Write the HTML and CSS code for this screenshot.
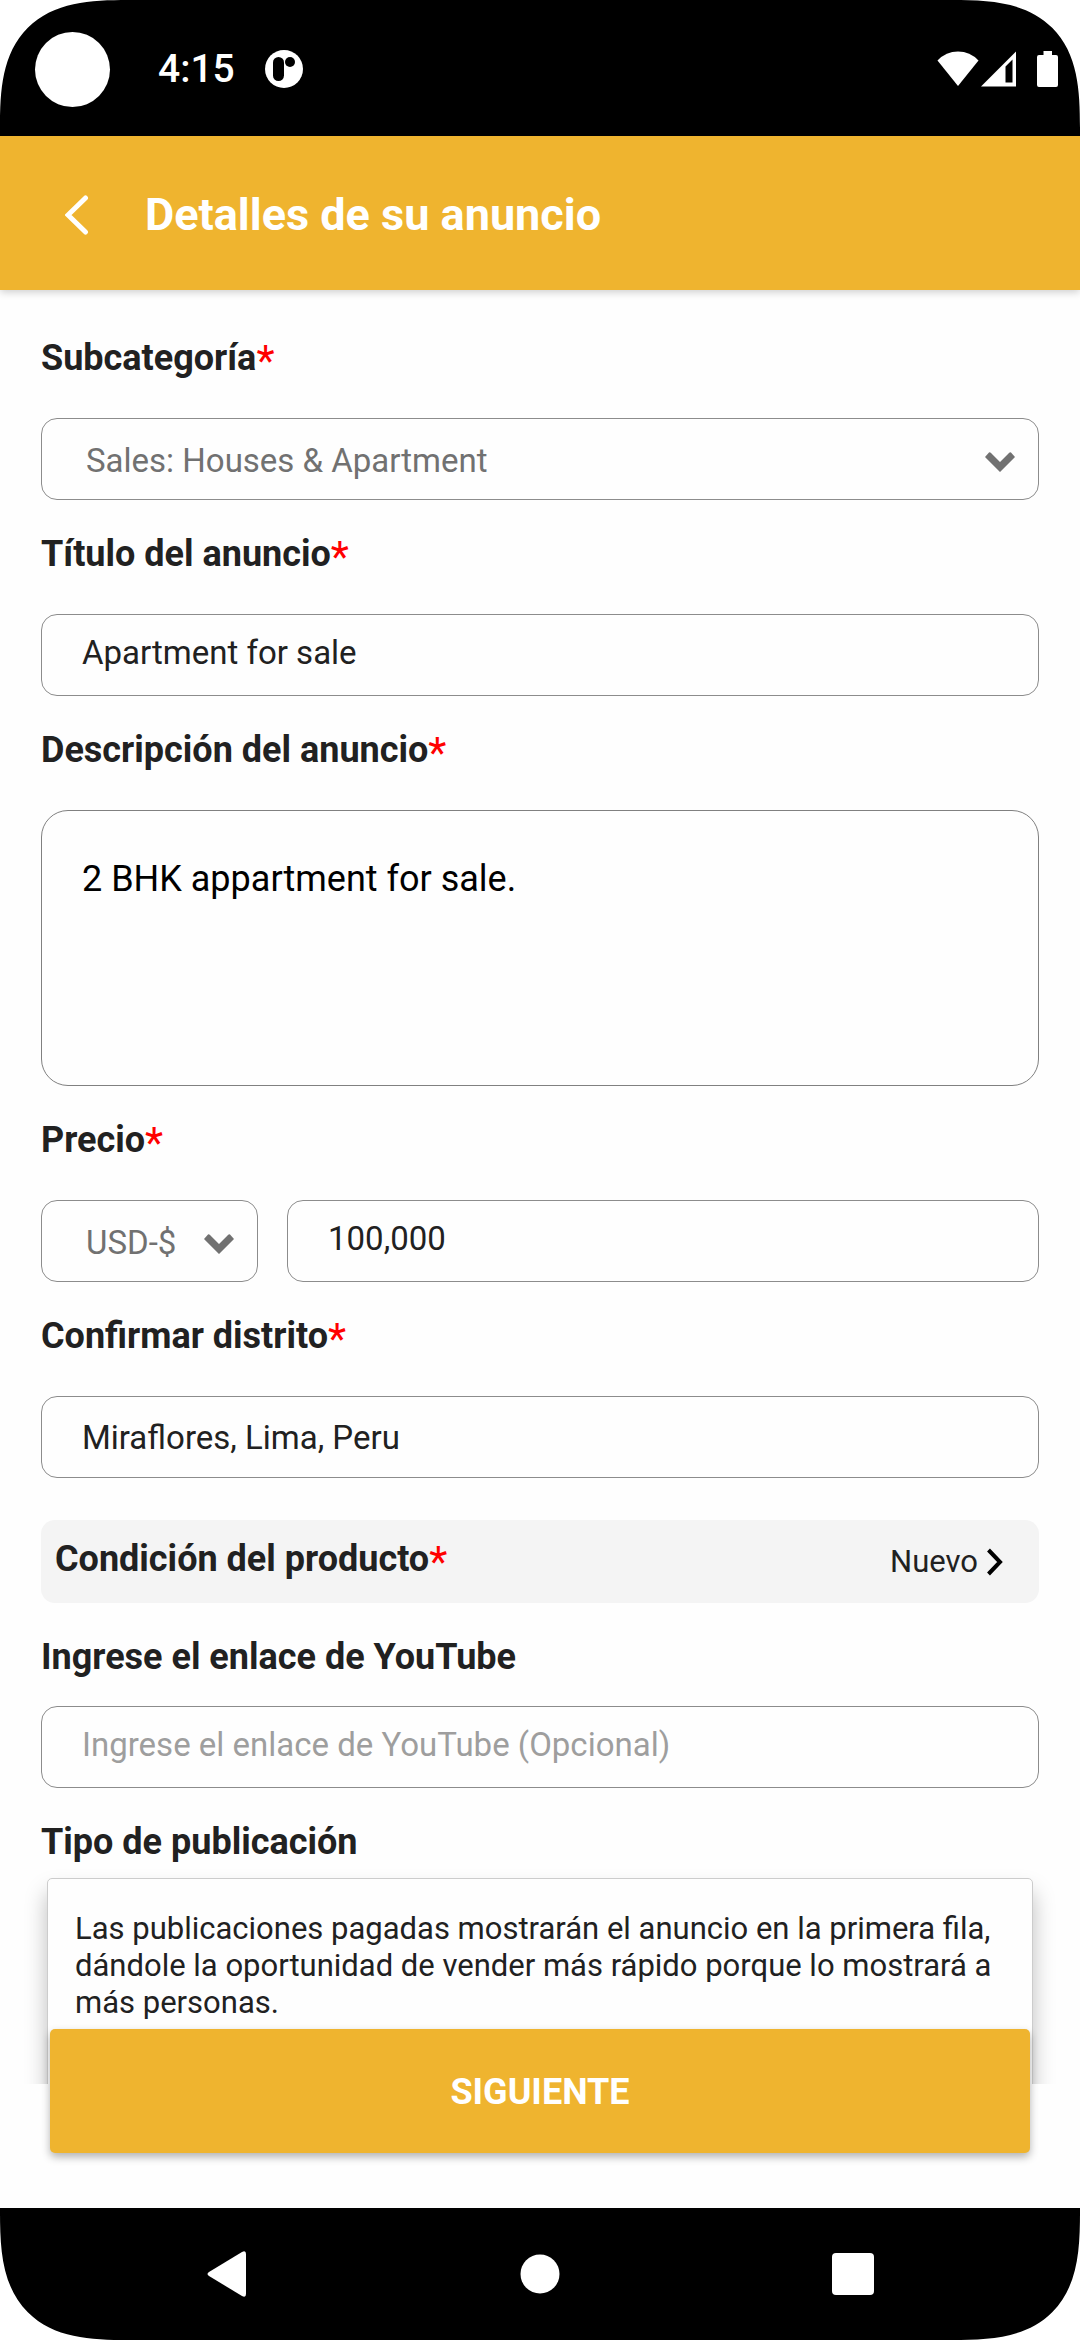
FILE: index.html
```html
<!DOCTYPE html>
<html lang="es">
<head>
  <meta charset="UTF-8">
  <meta name="viewport" content="width=device-width, initial-scale=1.0">
  <title>Detalles de su anuncio</title>
  <link rel="stylesheet" href="styles.css">
</head>
<body>
  <div class="screen">
    <div class="status-bar">
      <span class="camera"></span>
      <span class="clock">4:15</span>
      <svg class="app-icon" width="38" height="38" viewBox="0 0 38 38">
        <circle cx="19" cy="19" r="19" fill="#fff"/>
        <rect x="8" y="7" width="11" height="24" rx="5.500"/>
        <circle cx="25" cy="12" r="5"/>
      </svg>
      <div class="status-icons">
        <svg width="42" height="36" viewBox="0 0 42 36">
          <path d="M21 35 L0.5 9.5 Q9 0.5 21 0.5 T41.500 9.500 Z" fill="#fff"/>
        </svg>
        <svg width="36" height="36" viewBox="0 0 36 36">
          <path d="M0 35.500 L35 0.500 V35.500 Z M24.500 15.500 V31.500 H31.500 V8.500 Z" fill="#fff" fill-rule="evenodd"/>
        </svg>
        <svg class="battery" width="21" height="36" viewBox="0 0 21 36">
          <path d="M6.500 0 H15 V4 H19 Q21 4 21 6 V34 Q21 36 19 36 H2 Q0 36 0 34 V6 Q0 4 2 4 H6.500 Z" fill="#fff"/>
        </svg>
      </div>
    </div>

    <header class="header">
      <button class="back" type="button" aria-label="Volver">
        <svg width="24" height="40" viewBox="0 0 24 40">
          <path d="M20.500 3 L3 20 L20.500 37" fill="none" stroke="#fff" stroke-width="5" stroke-linecap="round"/>
        </svg>
      </button>
      <h1>Detalles de su anuncio</h1>
    </header>

    <main class="content">
      <form class="form" id="ad-form">
        <div class="field">
          <label for="subcategory">Subcategoría<span class="required">*</span></label>
          <div class="select">
            <select id="subcategory">
              <option>Sales: Houses &amp; Apartment</option>
            </select>
            <svg class="arrow" width="30" height="20" viewBox="0 0 30 20">
              <path d="M0 5 L4 0.500 Q5 0 6 1 L15 10 L24 1 Q25 0 26 0.500 L30 5 L15 20 Z" fill="#717171"/>
            </svg>
          </div>
        </div>

        <div class="field">
          <label for="title">Título del anuncio<span class="required">*</span></label>
          <input class="input" id="title" type="text" value="Apartment for sale">
        </div>

        <div class="field">
          <label for="description">Descripción del anuncio<span class="required">*</span></label>
          <textarea id="description">2 BHK appartment for sale.</textarea>
        </div>

        <div class="field">
          <label id="price-label" for="price">Precio<span class="required">*</span></label>
          <div class="price-row">
            <div class="select currency">
              <select aria-labelledby="price-label">
                <option>USD-$</option>
              </select>
              <svg class="arrow" width="30" height="20" viewBox="0 0 30 20">
                <path d="M0 5 L4 0.500 Q5 0 6 1 L15 10 L24 1 Q25 0 26 0.500 L30 5 L15 20 Z" fill="#717171"/>
              </svg>
            </div>
            <input class="input" id="price" type="text" value="100,000">
          </div>
        </div>

        <div class="field">
          <label for="district">Confirmar distrito<span class="required">*</span></label>
          <input class="input district" id="district" type="text" value="Miraflores, Lima, Peru">
        </div>

        <button class="condition" type="button">
          <span class="condition-label">Condición del producto<span class="required">*</span></span>
          <span class="condition-value">
            Nuevo
            <svg width="16" height="28" viewBox="0 0 16 28">
              <path d="M1.500 2 L13 14 L1.500 26" fill="none" stroke="#000" stroke-width="4"/>
            </svg>
          </span>
        </button>

        <div class="field compact">
          <label for="youtube">Ingrese el enlace de YouTube</label>
          <input class="input" id="youtube" type="text" placeholder="Ingrese el enlace de YouTube (Opcional)">
        </div>

        <section class="publication">
          <h2>Tipo de publicación</h2>
          <div class="card">
            <p>Las publicaciones pagadas mostrarán el anuncio en la primera fila, dándole la oportunidad de vender más rápido porque lo mostrará a más personas.</p>
          </div>
        </section>
      </form>
    </main>

    <div class="actions">
      <button class="next" type="submit" form="ad-form">SIGUIENTE</button>
    </div>

    <nav class="nav-bar">
      <button type="button" aria-label="Atrás">
        <svg width="40" height="46" viewBox="0 0 40 46">
          <path d="M2 21 L35 1 Q39 -1 39 3 V43 Q39 47 35 45 L2 25 Q-1 23 2 21 Z" fill="#fff"/>
        </svg>
      </button>
      <button type="button" aria-label="Inicio">
        <svg width="40" height="40" viewBox="0 0 40 40">
          <circle cx="20" cy="20" r="19.500" fill="#fff"/>
        </svg>
      </button>
      <button type="button" aria-label="Recientes">
        <svg width="42" height="42" viewBox="0 0 42 42">
          <rect width="42" height="42" rx="4" fill="#fff"/>
        </svg>
      </button>
    </nav>
  </div>
</body>
</html>
```
FILE: styles.css
```css
* {
  box-sizing: border-box;
}
body {
  margin: 0;
  background-color: #fff;
  color: #212121;
  font-family: Roboto, sans-serif;
}
button, input, select, textarea {
  font-family: inherit;
  color: inherit;
  margin: 0;
}
button {
  border: none;
  padding: 0;
  background: none;
  cursor: pointer;
}
svg {
  display: block;
}
.screen {
  display: flex;
  flex-direction: column;
  height: 100vh;
  border-radius: 104px;
  overflow: hidden;
  background-color: #fefefe;
}
@supports (corner-shape: superellipse(1.5)) {
  .screen {
    border-radius: 128px;
    corner-shape: superellipse(1.5);
  }
}

/* status bar */
.status-bar {
  display: flex;
  align-items: center;
  flex: none;
  height: 136px;
  padding: 2px 22px 0 35px;
  background-color: #000;
  color: #fff;
}
.camera {
  width: 75px;
  height: 75px;
  border-radius: 50%;
  background-color: #fff;
}
.clock {
  margin-left: 48px;
  font-size: 39px;
  font-weight: 500;
}
.app-icon {
  margin-left: 30px;
}
.status-icons {
  display: flex;
  gap: 2px;
  margin-left: auto;
}
.battery {
  margin-left: 18px;
}

/* header */
.header {
  display: flex;
  align-items: center;
  flex: none;
  height: 154px;
  padding: 4px 65px 0;
  gap: 56px;
  background-color: #efb42f;
  color: #fff;
  box-shadow: 0 2px 8px rgba(0, 0, 0, 0.2);
  z-index: 1;
}
.header h1 {
  margin: 0;
  font-size: 45px;
  font-weight: 700;
  line-height: 52px;
}

/* form */
.content {
  flex: 1;
  min-height: 0;
  overflow-y: auto;
  scrollbar-width: none;
}
.form {
  padding: 47px 41px 40px;
}
.field {
  display: flex;
  flex-direction: column;
  gap: 39px;
  margin-bottom: 33px;
}
.field label, .condition-label, .publication h2 {
  margin: 0;
  font-size: 36px;
  font-weight: 700;
  line-height: 42px;
}
.required {
  color: #f00;
  font-size: 42px;
  font-weight: 400;
  line-height: 0;
  vertical-align: -5px;
}
.input, .select select {
  width: 100%;
  height: 82px;
  border: 1px solid #8c8c8c;
  border-radius: 16px;
  background-color: transparent;
  font-size: 33px;
}
.input {
  padding: 0 40px 6px;
}
.input.district {
  padding-bottom: 0;
}
.input::placeholder {
  color: #9e9e9e;
  opacity: 1;
}
.select {
  position: relative;
}
.select select {
  appearance: none;
  padding: 2px 60px 0 44px;
  color: #717171;
}
.arrow {
  position: absolute;
  right: 24px;
  top: 34px;
  pointer-events: none;
}
textarea {
  height: 276px;
  padding: 47px 40px;
  border: 1px solid #808080;
  border-radius: 27px;
  background-color: transparent;
  color: #000;
  font-size: 36px;
  line-height: 42px;
  resize: none;
}
.price-row {
  display: flex;
  gap: 29px;
}
.currency {
  flex: 0 0 217px;
}
.currency select {
  padding-right: 0;
}
.condition {
  display: flex;
  justify-content: space-between;
  align-items: center;
  width: 100%;
  height: 83px;
  margin: 42px 0 33px;
  padding: 0 36px 0 14px;
  border-radius: 14px;
  background-color: #f4f4f4;
}
.condition-label {
  padding-bottom: 6px;
}
.condition-value {
  display: flex;
  align-items: center;
  gap: 9px;
  font-size: 31px;
}
.compact {
  gap: 28px;
}
.card {
  min-height: 300px;
  margin: 15px 6px 0;
  padding: 31px 27px;
  border: 1px solid #ccc;
  border-radius: 5px;
  background-color: #fefefe;
  box-shadow: 0 14px 22px rgba(0, 0, 0, 0.26);
}
.card p {
  margin: 0;
  font-size: 31px;
  line-height: 37px;
}

/* bottom button, sits over the end of the form */
.actions {
  flex: none;
  margin-top: -55px;
  padding: 0 50px 55px;
  z-index: 1;
}
.next {
  width: 100%;
  height: 124px;
  padding-top: 2px;
  border-radius: 5px;
  background-color: #efb42f;
  color: #fff;
  font-size: 36px;
  font-weight: 700;
  box-shadow: 0 4px 8px rgba(0, 0, 0, 0.3);
}

/* system navigation */
.nav-bar {
  display: flex;
  flex: none;
  height: 132px;
  padding: 0 71px;
  background-color: #000;
}
.nav-bar button {
  display: flex;
  flex: 1;
  justify-content: center;
  align-items: center;
}
```
